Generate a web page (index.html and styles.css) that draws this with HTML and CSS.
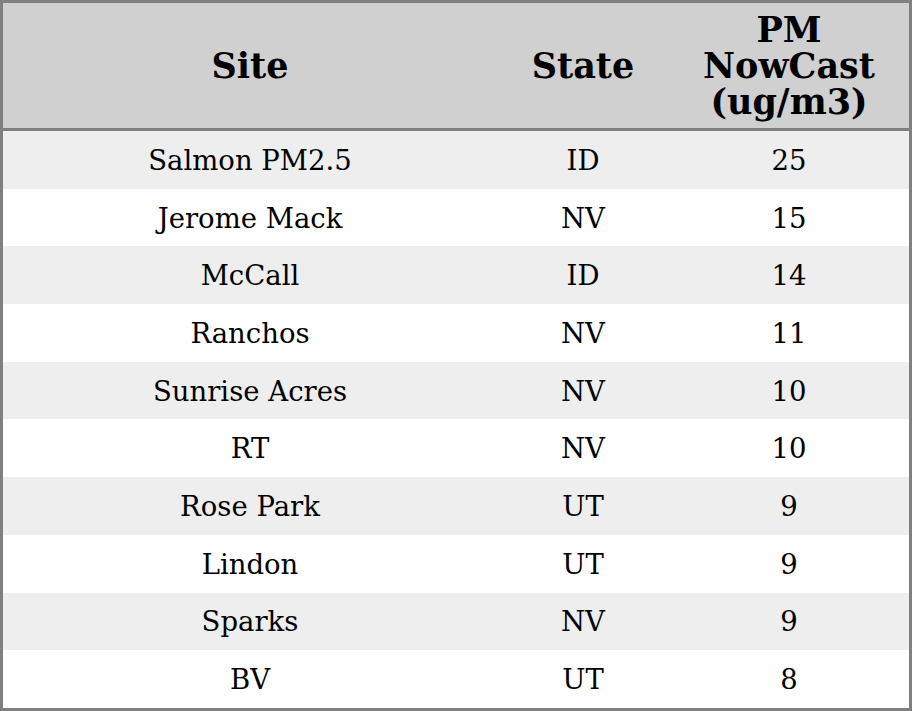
FILE: index.html
```html
<!DOCTYPE html>
<html>
<head>
<meta charset="utf-8">
<link rel="stylesheet" href="styles.css">
</head>
<body>
<table class="pm-table">
  <thead>
    <tr>
      <th class="col-site">Site</th>
      <th class="col-state">State</th>
      <th class="col-pm">PM<br>NowCast<br>(ug/m3)</th>
    </tr>
  </thead>
  <tbody>
    <tr><td>Salmon PM2.5</td><td>ID</td><td>25</td></tr>
    <tr><td>Jerome Mack</td><td>NV</td><td>15</td></tr>
    <tr><td>McCall</td><td>ID</td><td>14</td></tr>
    <tr><td>Ranchos</td><td>NV</td><td>11</td></tr>
    <tr><td>Sunrise Acres</td><td>NV</td><td>10</td></tr>
    <tr><td>RT</td><td>NV</td><td>10</td></tr>
    <tr><td>Rose Park</td><td>UT</td><td>9</td></tr>
    <tr><td>Lindon</td><td>UT</td><td>9</td></tr>
    <tr><td>Sparks</td><td>NV</td><td>9</td></tr>
    <tr><td>BV</td><td>UT</td><td>8</td></tr>
  </tbody>
</table>
</body>
</html>
```

FILE: styles.css
```css
html, body {
  margin: 0;
  padding: 0;
  background: #ffffff;
}
.pm-table {
  width: 912px;
  border-collapse: separate;
  border-spacing: 0;
  border: 3px solid #808080;
  font-family: "DejaVu Serif", serif;
  color: #000000;
  table-layout: fixed;
  box-sizing: border-box;
}
.pm-table th {
  background: #d0d0d0;
  font-size: 35px;
  line-height: 36px;
  font-weight: bold;
  height: 128px;
  padding: 0;
  text-align: center;
  vertical-align: middle;
  border-bottom: 3px solid #808080;
  box-sizing: border-box;
}
.col-site { width: 494px; }
.col-state { width: 172px; }
.col-pm { width: 240px; }
.pm-table td {
  font-size: 27.5px;
  height: 57.7px;
  padding: 0;
  text-align: center;
  vertical-align: middle;
  box-sizing: border-box;
}
.pm-table tbody tr:nth-child(odd) td {
  background: #eeeeee;
}
```
